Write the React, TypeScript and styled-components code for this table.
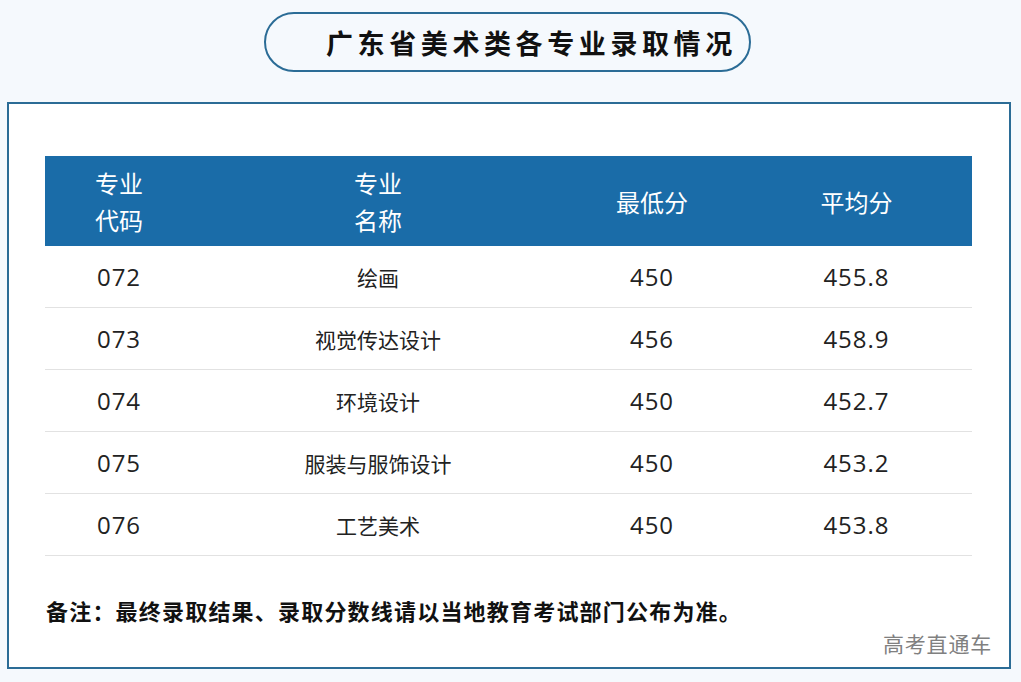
import React from "react";
import styled, { createGlobalStyle } from "styled-components";

const rows = [
  { code: "072", name: "绘画", min: "450", avg: "455.8" },
  { code: "073", name: "视觉传达设计", min: "456", avg: "458.9" },
  { code: "074", name: "环境设计", min: "450", avg: "452.7" },
  { code: "075", name: "服装与服饰设计", min: "450", avg: "453.2" },
  { code: "076", name: "工艺美术", min: "450", avg: "453.8" },
];

const GlobalStyle = createGlobalStyle`
  html, body {
    margin: 0;
    padding: 0;
    background: #f5f9fd;
    font-family: "Noto Sans CJK SC", "Noto Sans", sans-serif;
  }
`;

const Page = styled.div`
  width: 1021px;
  height: 682px;
  box-sizing: border-box;
  padding: 12px 10px 0 7px;
  display: flex;
  flex-direction: column;
  align-items: center;
`;

const TitlePill = styled.div`
  width: 487px;
  height: 60px;
  box-sizing: border-box;
  border: 2px solid #2b6c96;
  border-radius: 30px;
  display: flex;
  align-items: center;
  padding-left: 60px;
  font-size: 27px;
  font-weight: 700;
  letter-spacing: 4.6px;
  color: #111;
  margin-right: 3px;
`;

const Card = styled.div`
  margin-top: 30px;
  width: 100%;
  height: 567px;
  box-sizing: border-box;
  border: 2px solid #2b6c96;
  background: #fff;
  padding: 52px 37px 0 36px;
  display: flex;
  flex-direction: column;
`;

const Table = styled.div`
  width: 927px;
  display: grid;
  grid-template-columns: 148px 370px 178px 231px;
`;

const HeadCell = styled.div`
  height: 90px;
  background: #1a6ca8;
  color: #fff;
  font-size: 24px;
  line-height: 37px;
  display: flex;
  align-items: center;
  justify-content: center;
  text-align: center;
`;

const Cell = styled.div<{ $cjk?: boolean }>`
  height: 62px;
  box-sizing: border-box;
  border-bottom: 1px solid #e2e2e2;
  display: flex;
  align-items: center;
  justify-content: center;
  color: #222;
  font-size: ${(p) => (p.$cjk ? "21px" : "24px")};
  letter-spacing: ${(p) => (p.$cjk ? "0" : "1px")};
  font-family: ${(p) =>
    p.$cjk ? `"Noto Sans CJK SC", sans-serif` : `"Open Sans", "Noto Sans", sans-serif`};
`;

const Note = styled.div`
  margin-top: 38px;
  margin-left: 1px;
  font-size: 22px;
  font-weight: 700;
  letter-spacing: 1.2px;
  color: #111;
`;

const Mark = styled.div`
  align-self: flex-end;
  margin-top: 2px;
  margin-right: -20px;
  font-size: 21px;
  color: #808080;
  letter-spacing: 0.8px;
`;

export default function App() {
  return (
    <Page>
      <GlobalStyle />
      <TitlePill>广东省美术类各专业录取情况</TitlePill>
      <Card>
        <Table>
          <HeadCell>
            专业
            <br />
            代码
          </HeadCell>
          <HeadCell>
            专业
            <br />
            名称
          </HeadCell>
          <HeadCell>最低分</HeadCell>
          <HeadCell>平均分</HeadCell>
          {rows.map((r) => (
            <React.Fragment key={r.code}>
              <Cell>{r.code}</Cell>
              <Cell $cjk>{r.name}</Cell>
              <Cell>{r.min}</Cell>
              <Cell>{r.avg}</Cell>
            </React.Fragment>
          ))}
        </Table>
        <Note>备注：最终录取结果、录取分数线请以当地教育考试部门公布为准。</Note>
        <Mark>高考直通车</Mark>
      </Card>
    </Page>
  );
}
